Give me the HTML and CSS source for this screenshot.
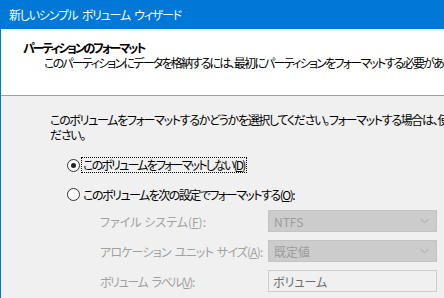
FILE: index.html
```html
<!DOCTYPE html>
<html lang="ja">
<head>
<meta charset="utf-8">
<link rel="stylesheet" href="styles.css">
</head>
<body>
<div class="window">
  <div class="titlebar">新しいシンプル ボリューム ウィザード</div>
  <div class="frame">
    <div class="header">
      <div class="h-title">パーティションのフォーマット</div>
      <div class="h-sub">このパーティションにデータを格納するには、最初にパーティションをフォーマットする必要があります。</div>
    </div>
    <div class="content">
      <div class="intro">
        <div class="line">このボリュームをフォーマットするかどうかを選択してください。フォーマットする場合は、使用する設定を選択してく</div>
        <div class="line">ださい。</div>
      </div>
      <div class="radio-row r1">
        <span class="radio checked"></span>
        <span class="focus">このボリュームをフォーマットしない(<u>D</u>)</span>
      </div>
      <div class="radio-row r2">
        <span class="radio"></span>
        <span class="rlabel">このボリュームを次の設定でフォーマットする(<u>O</u>):</span>
      </div>
      <div class="form">
        <div class="label">ファイル システム(<u>F</u>):</div>
        <div class="combo"><span>NTFS</span><svg class="chev" width="9" height="6" viewBox="0 0 9 6"><path d="M0.5 0.8 L4.5 4.8 L8.5 0.8" fill="none" stroke="#b4b4b4" stroke-width="1.1"/></svg></div>
        <div class="label tight">アロケーション ユニット サイズ(<u>A</u>):</div>
        <div class="combo"><span>既定値</span><svg class="chev" width="9" height="6" viewBox="0 0 9 6"><path d="M0.5 0.8 L4.5 4.8 L8.5 0.8" fill="none" stroke="#b4b4b4" stroke-width="1.1"/></svg></div>
        <div class="label tighter">ボリューム ラベル(<u>V</u>):</div>
        <div class="textbox">ボリューム</div>
      </div>
    </div>
  </div>
</div>
</body>
</html>
```

FILE: styles.css
```css
html, body {
  margin: 0;
  padding: 0;
}
body {
  width: 444px;
  height: 298px;
  overflow: hidden;
  background: #f0f0f0;
  font-family: "Noto Sans CJK JP", "Noto Sans", sans-serif;
  font-size: 12px;
  font-feature-settings: "palt";
  color: #000;
}
.window {
  width: 444px;
  height: 298px;
  display: flex;
  flex-direction: column;
}
.titlebar {
  height: 29px;
  flex: none;
  background: #0078d7;
  color: #fff;
  padding-left: 9px;
  display: flex;
  align-items: center;
  white-space: nowrap;
  line-height: 15px;
  letter-spacing: -1.25px;
  word-spacing: 3px;
}
.frame {
  flex: 1;
  border-left: 1px solid #0078d7;
  display: flex;
  flex-direction: column;
  min-height: 0;
}
.header {
  height: 67px;
  flex: none;
  background: #fff;
  border-bottom: 1px solid #a0a0a0;
  box-sizing: border-box;
  padding-top: 11px;
  white-space: nowrap;
  overflow: hidden;
  line-height: 15px;
}
.h-title {
  padding-left: 22px;
  font-weight: bold;
  letter-spacing: -2.1px;
}
.h-sub {
  padding-left: 43px;
  letter-spacing: -1.75px;
}
.content {
  flex: 1;
  padding-left: 49px;
  padding-top: 16px;
  white-space: nowrap;
  overflow: hidden;
  line-height: 15px;
}
.intro {
  letter-spacing: -1.3px;
}
.line {
  height: 15px;
}
.radio-row {
  display: flex;
  align-items: center;
  padding-left: 17px;
  height: 16px;
}
.r1 {
  margin-top: 15px;
}
.r2 {
  margin-top: 13px;
}
.radio {
  width: 11px;
  height: 11px;
  border: 1px solid #333;
  border-radius: 50%;
  background: #fff;
  box-sizing: content-box;
  position: relative;
  flex: none;
}
.radio.checked::after {
  content: "";
  position: absolute;
  left: 3px;
  top: 3px;
  width: 5px;
  height: 5px;
  border-radius: 50%;
  background: #222;
}
.focus {
  margin-left: 2px;
  padding: 0 1px 0 1px;
  outline: 1px dotted #000;
  outline-offset: 0;
  line-height: 14px;
  letter-spacing: -1.8px;
}
.rlabel {
  margin-left: 3px;
  letter-spacing: -1.5px;
}
.form {
  display: grid;
  grid-template-columns: 168px 169px;
  row-gap: 8px;
  margin-top: 8px;
  padding-left: 50px;
  align-items: center;
}
.label {
  color: #a0a0a0;
  height: 22px;
  line-height: 24px;
  overflow: hidden;
}
.label.tight {
  letter-spacing: -0.8px;
  word-spacing: 2px;
}
.label.tighter {
  letter-spacing: -1.4px;
  word-spacing: 3px;
}
.combo {
  height: 22px;
  box-sizing: border-box;
  background: #cccccc;
  border: 1px solid #c4c4c4;
  color: #9c9c9c;
  display: flex;
  align-items: center;
  justify-content: space-between;
  padding: 0 7px 0 5px;
}
.chev {
  flex: none;
}
.textbox {
  height: 22px;
  box-sizing: border-box;
  background: #f0f0f0;
  border: 1px solid #cccccc;
  color: #6d6d6d;
  padding-left: 4px;
  display: flex;
  align-items: center;
}
```
